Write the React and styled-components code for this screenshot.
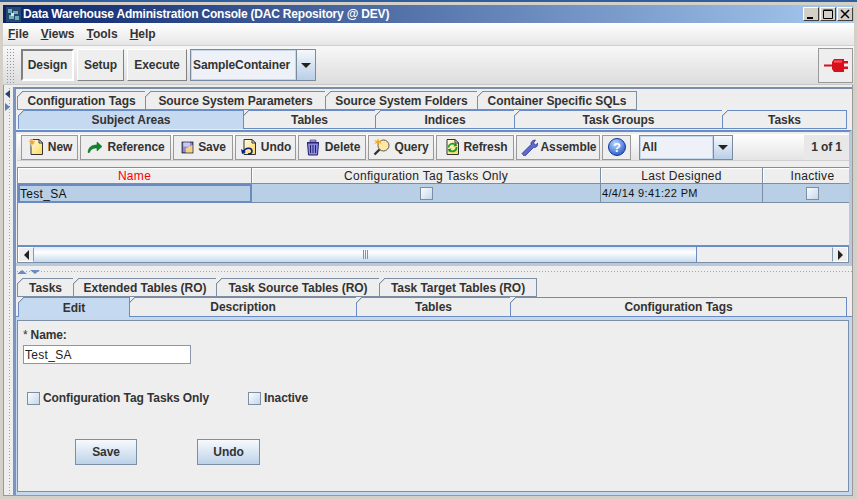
import React from "react";
import styled, { createGlobalStyle } from "styled-components";

const Global = createGlobalStyle`
  html, body { margin: 0; padding: 0; background: #d4d0c8; }
  * { box-sizing: border-box; }
`;

const Win = styled.div`
  width: 857px; height: 499px; overflow: hidden; background: #d4d0c8;
  font: bold 12px "Liberation Sans", Arial, sans-serif; color: #333; letter-spacing: -.1px;
  display: flex; flex-direction: column;
  border-top: 2px solid #2f5f9f;
  padding: 3px 3px 3px 3px;
`;
const TitleBar = styled.div`
  height: 18px; flex: none; display: flex; align-items: center; color: #fff;
  background: linear-gradient(90deg, #0a246a 0%, #a6caf0 100%);
  padding: 0 1px 0 3px; letter-spacing: -.2px;
`;
const TitleText = styled.span` margin-left: 2px; flex: 1; `;
const WinBtns = styled.div` display: flex; gap: 1px; `;
const WinBtn = styled.div`
  width: 16px; height: 14px; background: #d4d0c8; display: flex; align-items: center; justify-content: center;
  border: 1px solid; border-color: #fff #404040 #404040 #fff;
`;
const MenuBar = styled.div`
  height: 23px; flex: none; display: flex; align-items: center; gap: 12px; padding: 0 5px; color: #333;
  background: linear-gradient(#fff, #e6e6e6); border-bottom: 1px solid #cfcfcf;
  letter-spacing: 0;
  u { text-decoration: underline; }
`;
const ToolBar = styled.div`
  height: 39px; flex: none; display: flex; align-items: center; padding: 0 1px 0 3px;
  background: linear-gradient(#f8f8f8, #dcdcdc); border-bottom: 1px solid #c8c8c8;
`;
const Grip = styled.div`
  width: 9px; height: 35px; margin-right: 6px;
  background-image: radial-gradient(#8c97a8 0.7px, transparent 0.8px); background-size: 3px 3px;
`;
const ModeBtn = styled.div`
  height: 32px; width: ${p => p.$w}px; margin-right: 3px; display: flex; align-items: center; justify-content: center;
  background: #eee; border: 1px solid; border-color: #fff #808080 #808080 #fff;
  ${p => p.$on && "border-color: #808080 #fff #fff #808080; border-width: 2px;"}
`;
const Combo = styled.div`
  display: flex; width: ${p => p.$w}px; height: ${p => p.$h}px; border: 1px solid #7a8aa0; flex: none;
`;
const ComboText = styled.div`
  flex: 1; display: flex; align-items: center; padding-left: 1px; background: #eef1f7; border: 1px solid #c5d5ea; color: #333;
`;
const ComboArrow = styled.div`
  width: 19px; display: flex; align-items: center; justify-content: center; border-left: 1px solid #7a8aa0;
  background: linear-gradient(#f5f8fc, #b8cfe6);
  &::before { content: ""; border: 5px solid transparent; border-top: 5px solid #222; border-bottom: 0; }
`;
const Spacer = styled.div` flex: 1; `;
const PlugBtn = styled.div`
  width: 35px; height: 35px; border: 1px solid #999; display: flex; align-items: center; justify-content: center; background: #eee;
`;
const Body = styled.div`
  flex: 1; display: flex; min-height: 0; background: #eee; margin-right: 1px; padding-top: 2px;
  border: 1px solid #999; border-top: 0;
`;
const Rail = styled.div`
  width: 9px; flex: none;
  background-image: radial-gradient(#98a2b0 0.7px, transparent 0.8px); background-size: 3px 3px; background-position: 4px 0;
  background-repeat: repeat-y;
  padding: 3px 0 0 1px;
  display: flex; flex-direction: column; gap: 5px;
`;
const RailArrow = styled.div`
  width: 0; height: 0; border: 4px solid transparent; border-left: 0;
  ${p => p.$r ? "border-left: 5px solid #5a80b8; border-right: 0;" : "border-right: 5px solid #24446e;"}
`;
const Main = styled.div`
  flex: 1; display: flex; flex-direction: column; min-width: 0; border-top: 2px solid #7a8ea8; border-left: 3px solid #7b95c0;
  padding-top: 2px;
`;
const TabRow = styled.div`
  display: flex; height: ${p => p.$h || 19}px; flex: none; padding-left: ${p => p.$pl || 0}px;
`;
const Tab = styled.div`
  width: ${p => p.$w}px; flex: none; position: relative; display: flex; align-items: center; justify-content: center;
  border: 1px solid ${p => p.$active ? "#6f8ab8" : "#7c8ea4"}; margin-right: -1px; letter-spacing: -.05px;
  background: ${p => p.$active ? "#c5daf0" : "#eee"};
  color: #333; ${p => p.$active && "border-bottom: 0; z-index: 1;"}
  ${p => p.$blue && "border-color: #6a8cc4;"}
  &::before {
    content: ""; position: absolute; left: -1px; top: -1px; width: 6px; height: 6px;
    background: linear-gradient(135deg, #eee 48%, #7c8ea4 50%, transparent 62%);
  }
`;
const Panel = styled.div`
  flex: none; height: 136px; margin-top: 1px; border-top: 2px solid #6a8cc4; border-right: 3px solid #b9c8dc; border-bottom: 3px solid #b9c8dc;
  display: flex; flex-direction: column; padding: 2px 0 0 1px;
`;
const ActionBar = styled.div`
  height: 27px; display: flex; align-items: center; flex: none;
  background: linear-gradient(#fff, #e4e4e4); border-bottom: 1px solid #d0d0d0; padding: 0 2px 0 4px;
`;
const ActionBtn = styled.div`
  width: ${p => p.$w}px; height: 25px; flex: none; margin-right: 2px; display: flex; align-items: center; justify-content: center; gap: 3px;
  border: 1px solid #999; background: #eee; color: #333;
`;
const ComboGap = styled.div` width: 6px; flex: none; `;
const PageCount = styled.div`
  width: 45px; height: 25px; flex: none; margin-left: 71px; background: #e8e8e8; display: flex; align-items: center; justify-content: center;
`;
const Table = styled.div`
  margin: 6px 0 0 0; height: 79px; border: 1px solid #7c8ea4; border-right: 0; display: flex; flex-direction: column; flex: none; width: 832px;
  font-weight: 400; color: #222; overflow: hidden; letter-spacing: 0;
`;
const Grid = styled.div`
  display: grid; grid-template-columns: 234px 349px 162px 100px; flex: none;
`;
const Head = styled.div`
  height: 16px; display: flex; align-items: center; justify-content: center; background: #eee; color: ${p => p.$red ? "#f00" : "#222"};
  border-right: 1px solid #7c8ea4; border-bottom: 1px solid #7c8ea4; letter-spacing: .3px;
  box-shadow: inset 1px 1px 0 #fff;
`;
const Cell = styled.div`
  height: 19px; background: #b8cfe5; display: flex; align-items: center; justify-content: ${p => p.$center ? "center" : "flex-start"};
  padding-left: ${p => p.$pad || 0}px; border-right: 1px solid #7c8ea4; border-bottom: 1px solid #7c8ea4; color: #111;
  ${p => p.$focus && "border: 2px solid #6a8ac0; letter-spacing: .3px;"}
  ${p => p.$small && "font-size: 11px; letter-spacing: .35px;"}
`;
const Check = styled.div`
  width: 13px; height: 13px; border: 1px solid #7c8ea4; background: linear-gradient(135deg, #fafcfe, #c5d7ea); flex: none;
`;
const Scroll = styled.div`
  height: 17px; flex: none; width: 832px; display: flex; border: 1px solid #7c8ea4; border-top: 1px solid #6a8cc4; background: #eee;
`;
const ScrollBtn = styled.div`
  width: 16px; display: flex; align-items: center; justify-content: center; background: #eee; border: 1px solid #fff;
  ${p => p.$r ? "border-left: 1px solid #8a9ab0;" : "border-right: 1px solid #8a9ab0;"}
  &::before { content: ""; border: 5px solid transparent; ${p => p.$r ? "border-left: 5px solid #222; border-right: 0;" : "border-right: 5px solid #222; border-left: 0;"} }
`;
const Thumb = styled.div`
  width: 663px; flex: none; display: flex; align-items: center; justify-content: center; border-right: 1px solid #6a8cc4;
  background: linear-gradient(#dbe8f6, #fff 35%, #c5daf0);
  &::before { content: ""; width: 5px; height: 9px; background: repeating-linear-gradient(90deg, #7f93b0 0 1px, transparent 1px 2px); }
`;
const Splitter = styled.div`
  height: 12px; flex: none; display: flex; align-items: center; gap: 3px; padding-left: 1px;
  background-image: radial-gradient(#a0a8b4 0.7px, transparent 0.8px); background-size: 3px 3px; background-position: 0 4px; background-repeat: repeat-x;
`;
const SplitArrow = styled.div`
  width: 0; height: 0; border: 5px solid transparent; border-top: 0; border-bottom: 4px solid #6a8cc4;
  ${p => p.$d && "border-bottom: 0; border-top: 4px solid #6a8cc4;"}
`;
const Lower = styled.div`
  flex: 1; display: flex; flex-direction: column; min-height: 0;
`;
const FormPanel = styled.div`
  flex: 1; border: 3px solid #c5d8ee; border-left-width: 1px;
  box-shadow: 0 -1px 0 #6a8cc4, inset 0 0 0 1px #7c8ea4; padding: 7px 0 0 6px;
`;
const Label = styled.div` height: 16px; display: flex; align-items: center; gap: 3px; `;
const Star = styled.span` font-weight: 400; `;
const Input = styled.div`
  width: 168px; height: 19px; margin-top: 2px; background: #fff; border: 1px solid #8a97a8; display: flex; align-items: center; padding-left: 1px;
  font-weight: 400; color: #222; letter-spacing: .3px;
`;
const ChecksRow = styled.div` display: flex; align-items: center; margin: 27px 0 0 4px; height: 14px; `;
const CheckLabel = styled.div` margin: 0 39px 0 3px; `;
const FormBtns = styled.div` display: flex; margin: 34px 0 0 52px; gap: 60px; `;
const FormBtn = styled.div`
  width: ${p => p.$w}px; height: 26px; border: 1px solid #7c8ea4; display: flex; align-items: center; justify-content: center;
  background: linear-gradient(#f7fafd, #bcd2e8);
`;

const I = ({ children, w = 18, h = 18 }) => <svg width={w} height={h} viewBox="0 0 18 18" style={{ flex: "none" }}>{children}</svg>;
const Page = () => (
  <>
    <defs><linearGradient id="pg" x1="0" y1="0" x2="1" y2="1"><stop offset="0" stopColor="#fffdf0" /><stop offset="1" stopColor="#ffd84a" /></linearGradient></defs>
    <path d="M4 1.500h8l3.500 3.500v11.500H4z" fill="url(#pg)" stroke="#333" strokeWidth="1" />
    <path d="M12 1.500v3.500h3.500z" fill="#fff" stroke="#333" />
  </>
);

const NewIcon = () => <I><Page /><path d="M5 0l1 3 3-1-2 3 2 2-3-1-1 3-1-3-3 1 2-2-2-3 3 1z" fill="#f5a623" stroke="#fff" strokeWidth=".4" /></I>;
const RefIcon = () => <I><path d="M2 14.500c.5-5 3-7.500 9-7.500V4l5 4.500-5 4.500v-3c-4 0-6 1-7.500 4.500z" fill="#0d8a28" stroke="#075a18" strokeWidth=".5" /></I>;
const SaveIcon = () => <I w={15} h={15}><path d="M2 2h14v14H2z" fill="#111" /><path d="M3 3h12v12H3z" fill="#8a8ad8" /><path d="M7 10l8-4v9H7z" fill="#f3d27a" /><path d="M4 3h8v5H4z" fill="#c8c8f4" /></I>;
const UndoIcon = () => <I><Page /><path d="M1 11l1 5 4-2z" fill="#0a1f8a" /><path d="M3.500 13.500c2-4 8-4.500 8.500-.5 0 2-2 3-4 3" fill="none" stroke="#0a1f8a" strokeWidth="1.600" /></I>;
const TrashIcon = () => <I><path d="M3 4h12v1H3z" fill="#33337a" /><path d="M3.500 5h11l-1 12h-9z" fill="#8c8ce0" stroke="#22226a" /><path d="M6.500 7v8M9 7v8M11.500 7v8" stroke="#22226a" /><path d="M6 2h6v2H6z" fill="#b0b0e8" stroke="#22226a" strokeWidth=".6" /></I>;
const QueryIcon = () => <I><circle cx="10.500" cy="7.500" r="5.500" fill="#ffe9a0" stroke="#555" /><path d="M6.500 11.500l-5 5" stroke="#333" strokeWidth="2.400" /><path d="M5 0l1 3 3-1-2 2 2 2-3-1-1 3-1-3-3 1 2-2-2-2 3 1z" fill="#f5a623" /></I>;
const RefreshIcon = () => <I><Page /><path d="M5.500 9.500a4 4 0 0 1 6.500-3M13.500 9a4 4 0 0 1-6.500 3.500" fill="none" stroke="#16a030" strokeWidth="1.800" /><path d="M10.500 8.500l3.500-.5-1-3.500zM8.500 10.500l-3.500.5 1 3.500z" fill="#0f8a28" /></I>;
const WrenchIcon = () => <I><path d="M2 15.500l9-9c-.5-2 1-4.500 4.500-4.500l-2 3 2 2 2.500-2c0 3.500-2.500 5-4.500 4.500l-9 9z" fill="#5b6ad0" stroke="#252a7a" strokeWidth=".7" /></I>;
const HelpIcon = () => <svg width="20" height="20" viewBox="0 0 20 20"><defs><radialGradient id="h" cx=".4" cy=".3" r=".8"><stop offset="0" stopColor="#bcd8ff" /><stop offset="1" stopColor="#1a50c8" /></radialGradient></defs><circle cx="10" cy="10" r="8.500" fill="url(#h)" stroke="#123a9a" /><text x="10" y="14.500" textAnchor="middle" fill="#fff" fontSize="13" fontWeight="bold" fontFamily="Liberation Sans">?</text></svg>;
const PlugIcon = () => <svg width="24" height="13" viewBox="0 0 24 13"><path d="M0 5.500h8V3l2-3h10v2h4v2.500h-4v3h4V10h-4v3H10L8 10V7.500H0z" fill="#d80f1c" /><path d="M10 1.500h8v2h-8z" fill="#ff5a5a" /></svg>;
const AppIcon = () => <svg width="15" height="15" viewBox="0 0 15 15"><path d="M0 0h15v15H0z" fill="#29476e" /><path d="M2 2h4v4H2zM7 4h5v3H7zM3 8h5v4H3zM9 9h4v4H9z" fill="#6bb0b8" /><path d="M5 6h3v3H5z" fill="#cfe3ea" /></svg>;

const topTabs = [["Configuration Tags", 129], ["Source System Parameters", 181], ["Source System Folders", 153], ["Container Specific SQLs", 160]];
const subTabs = [["Subject Areas", 226], ["Tables", 133], ["Indices", 140], ["Task Groups", 209], ["Tasks", 125]];
const lowTabs = [["Tasks", 57], ["Extended Tables (RO)", 144], ["Task Source Tables (RO)", 164], ["Task Target Tables (RO)", 158]];
const editTabs = [["Edit", 112], ["Description", 228], ["Tables", 155], ["Configuration Tags", 337]];
const actions = [["New", 57, NewIcon], ["Reference", 91, RefIcon], ["Save", 60, SaveIcon], ["Undo", 61, UndoIcon], ["Delete", 68, TrashIcon], ["Query", 66, QueryIcon], ["Refresh", 78, RefreshIcon], ["Assemble", 84, WrenchIcon]];

export default function App() {
  return (
    <Win>
      <Global />
      <TitleBar>
        <AppIcon />
        <TitleText>Data Warehouse Administration Console (DAC Repository @ DEV)</TitleText>
        <WinBtns>
          <WinBtn><svg width="10" height="10"><path d="M1 8h6v2H1z" fill="#000" /></svg></WinBtn>
          <WinBtn><svg width="10" height="10"><path d="M0.500 1.500h9v8h-9z M0.500 1h9" fill="none" stroke="#000" /></svg></WinBtn>
          <WinBtn><svg width="10" height="10"><path d="M1 1l8 8M9 1l-8 8" stroke="#000" strokeWidth="1.500" /></svg></WinBtn>
        </WinBtns>
      </TitleBar>
      <MenuBar>
        <span><u>F</u>ile</span><span><u>V</u>iews</span><span><u>T</u>ools</span><span><u>H</u>elp</span>
      </MenuBar>
      <ToolBar>
        <Grip />
        <ModeBtn $w={53} $on>Design</ModeBtn>
        <ModeBtn $w={47}>Setup</ModeBtn>
        <ModeBtn $w={60}>Execute</ModeBtn>
        <Combo $w={126} $h={32}><ComboText>SampleContainer</ComboText><ComboArrow /></Combo>
        <Spacer />
        <PlugBtn><PlugIcon /></PlugBtn>
      </ToolBar>
      <Body>
        <Rail><RailArrow /><RailArrow $r /></Rail>
        <Main>
          <TabRow $pl={1}>{topTabs.map(([t, w]) => <Tab key={t} $w={w}>{t}</Tab>)}</TabRow>
          <TabRow $pl={2}>{subTabs.map(([t, w], i) => <Tab key={t} $w={w} $active={i === 0} $blue>{t}</Tab>)}</TabRow>
          <Panel>
            <ActionBar>
              {actions.map(([t, w, Ic]) => <ActionBtn key={t} $w={w}><Ic />{t}</ActionBtn>)}
              <ActionBtn $w={29}><HelpIcon /></ActionBtn>
              <ComboGap />
              <Combo $w={94} $h={25}><ComboText>All</ComboText><ComboArrow /></Combo>
              <PageCount>1 of 1</PageCount>
            </ActionBar>
            <Table>
              <Grid>
                <Head $red>Name</Head><Head>Configuration Tag Tasks Only</Head><Head>Last Designed</Head><Head>Inactive</Head>
                <Cell $focus>Test_SA</Cell><Cell $center><Check /></Cell><Cell $small $pad={1}>4/4/14 9:41:22 PM</Cell><Cell $center><Check /></Cell>
              </Grid>
            </Table>
            <Scroll><ScrollBtn /><Thumb /><Spacer /><ScrollBtn $r /></Scroll>
          </Panel>
          <Splitter><SplitArrow /><SplitArrow $d /></Splitter>
          <Lower>
            <TabRow $pl={1}>{lowTabs.map(([t, w]) => <Tab key={t} $w={w}>{t}</Tab>)}</TabRow>
            <TabRow $pl={2} $h={20}>{editTabs.map(([t, w], i) => <Tab key={t} $w={w} $active={i === 0} $blue>{t}</Tab>)}</TabRow>
            <FormPanel>
              <Label><Star>*</Star> Name:</Label>
              <Input>Test_SA</Input>
              <ChecksRow>
                <Check /><CheckLabel>Configuration Tag Tasks Only</CheckLabel>
                <Check /><CheckLabel>Inactive</CheckLabel>
              </ChecksRow>
              <FormBtns>
                <FormBtn $w={62}>Save</FormBtn>
                <FormBtn $w={63}>Undo</FormBtn>
              </FormBtns>
            </FormPanel>
          </Lower>
        </Main>
      </Body>
    </Win>
  );
}
